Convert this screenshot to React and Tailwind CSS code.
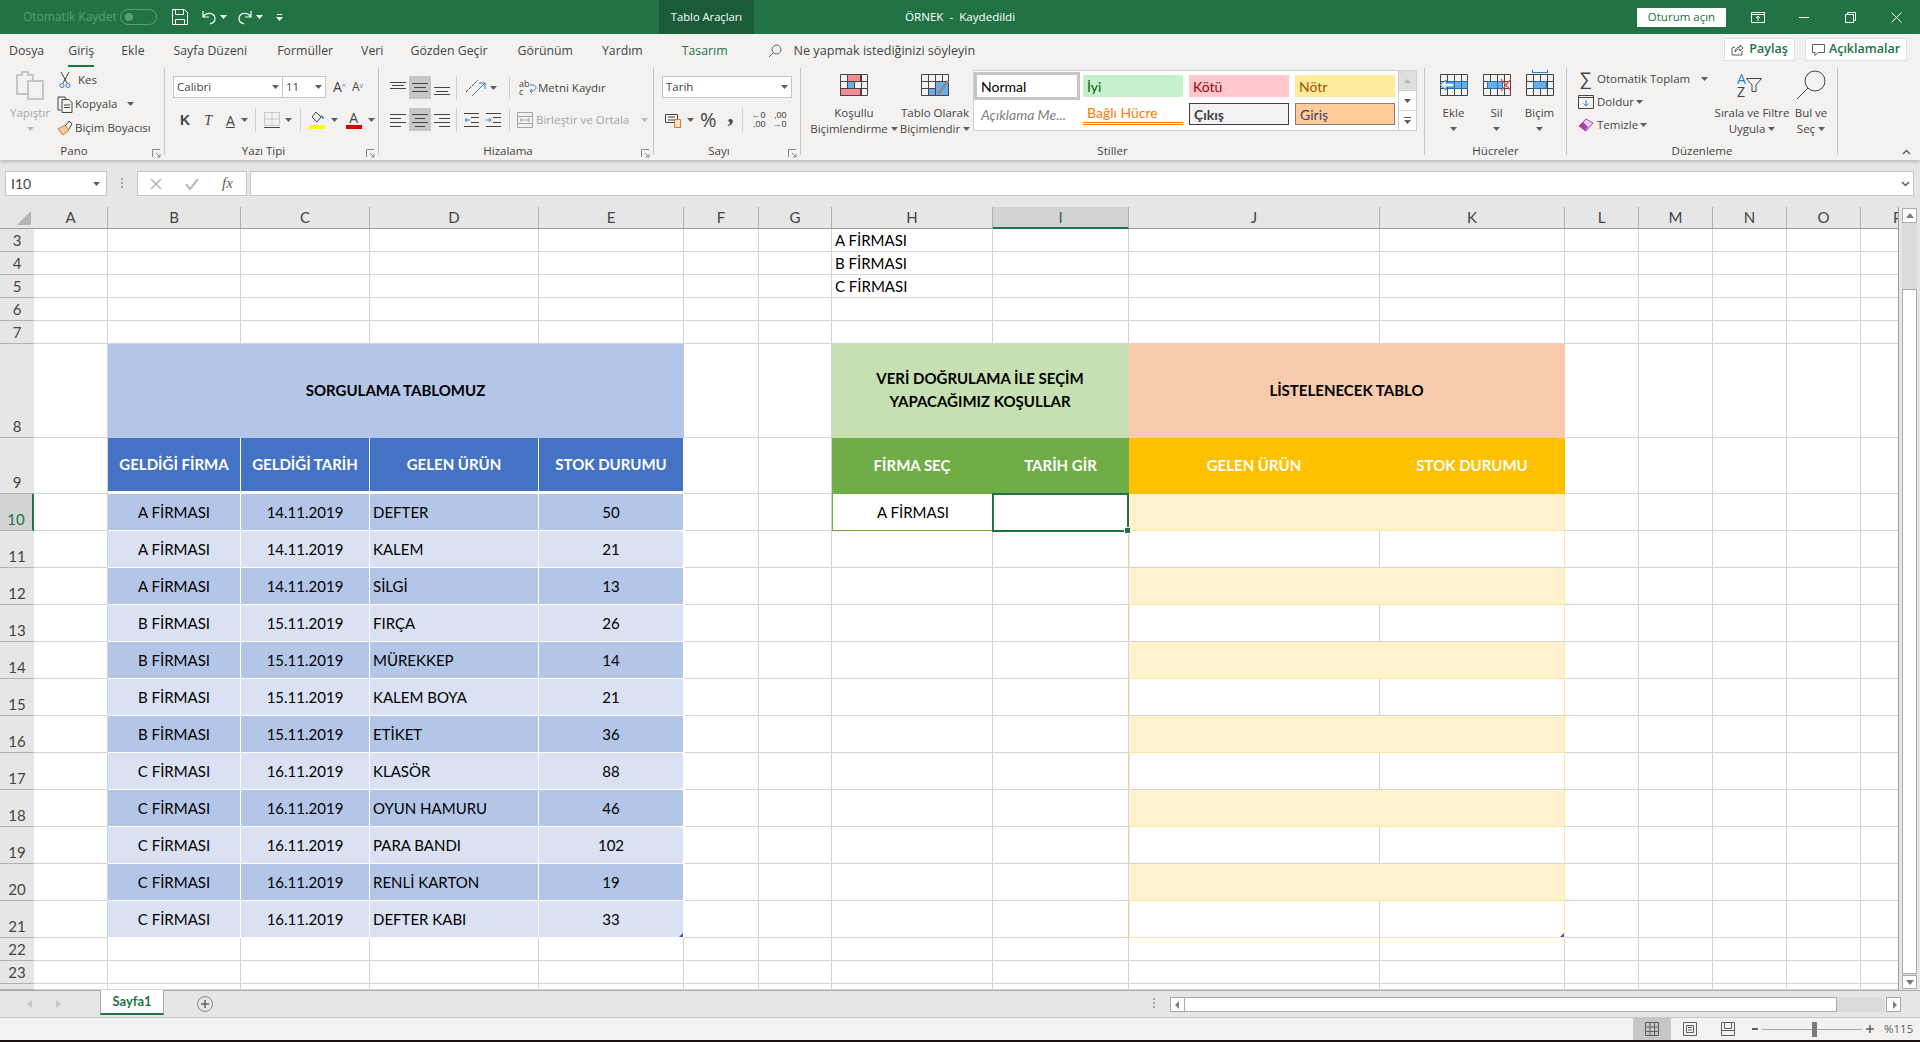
import React from "react";
import clsx from "clsx";
import { twMerge } from "tailwind-merge";

const Caret = ({ className = "fill-[#605e5c]" }) => (
  <svg width="7" height="4" viewBox="0 0 7 4" className={clsx("shrink-0", className)}>
    <path d="M0 0h7L3.5 4z" />
  </svg>
);

const Launcher = () => (
  <svg width="9" height="9" viewBox="0 0 9 9" className="absolute right-[3px] bottom-[-3px]" fill="none" stroke="#8a8886">
    <path d="M.5 8V.5H8" />
    <path d="M4 4l4 4M8 5v3H5" />
  </svg>
);

const Group = ({ className, label, launcher, children }) => (
  <div className={clsx("relative flex flex-col h-[87px] shrink-0 border-r border-[#c8c6c4]", className)}>
    <div className="flex h-[79px]">{children}</div>
    <div className={clsx("h-[8px] leading-[8px] text-center text-[11.5px] text-[#444]", launcher && "pr-[16px]")}>{label}</div>
    {launcher && <Launcher />}
  </div>
);

const LargeButton = ({ icon, lines, caret, className, disabled }) => (
  <div className={clsx("flex flex-col items-center shrink-0 pt-[2px]", disabled ? "text-[#a6a6a6]" : "text-[#444]", className)}>
    <div className="h-[30px] flex items-center justify-center mb-[5px]">{icon}</div>
    {lines.map((l, i) => (
      <div key={i} className="h-[16px] leading-[16px] text-[11.5px] whitespace-nowrap flex items-center gap-[3px]">
        {l}
        {caret && i === lines.length - 1 && <Caret />}
      </div>
    ))}
  </div>
);

const VSep = ({ className }) => <div className={clsx("w-px h-[24px] bg-[#d2d0ce] shrink-0", className)} />;

const Lines = ({ rows, sel, className }) => (
  <div className={clsx("w-[22px] h-[23px] flex items-center justify-center shrink-0", sel && "bg-[#c8c6c4]", className)}>
    <svg width="16" height="16" viewBox="0 0 16 16" stroke="#444" strokeWidth="1">
      {rows.map(([y, x1, x2], i) => (
        <path key={i} d={`M${x1} ${y}.5H${x2}`} />
      ))}
    </svg>
  </div>
);

const GridIcon = ({ children, w = 28, h = 22 }) => (
  <svg width={w} height={h} viewBox="0 0 28 22" fill="none">
    <path d="M.5.5h27v21H.5zM.5 7.5h27M.5 14.5h27M7.5.5v21M14.5.5v21M21.5.5v21" stroke="#444" />
    {children}
  </svg>
);

const tabs = [
  ["Dosya", "ml-[9px]"],
  ["Giriş", "ml-[24px]"],
  ["Ekle", "ml-[27px]"],
  ["Sayfa Düzeni", "ml-[29px]"],
  ["Formüller", "ml-[30px]"],
  ["Veri", "ml-[28px]"],
  ["Gözden Geçir", "ml-[27px]"],
  ["Görünüm", "ml-[30px]"],
  ["Yardım", "ml-[29px]"],
];

const colWidths = "grid-cols-[34px_74px_133px_129px_169px_145px_75px_73px_161px_136px_251px_185px_74px_74px_74px_74px_74px]";
const letters = ["A", "B", "C", "D", "E", "F", "G", "H", "I", "J", "K", "L", "M", "N", "O", "P"];

const rows = [
  ["A FİRMASI", "14.11.2019", "DEFTER", "50"],
  ["A FİRMASI", "14.11.2019", "KALEM", "21"],
  ["A FİRMASI", "14.11.2019", "SİLGİ", "13"],
  ["B FİRMASI", "15.11.2019", "FIRÇA", "26"],
  ["B FİRMASI", "15.11.2019", "MÜREKKEP", "14"],
  ["B FİRMASI", "15.11.2019", "KALEM BOYA", "21"],
  ["B FİRMASI", "15.11.2019", "ETİKET", "36"],
  ["C FİRMASI", "16.11.2019", "KLASÖR", "88"],
  ["C FİRMASI", "16.11.2019", "OYUN HAMURU", "46"],
  ["C FİRMASI", "16.11.2019", "PARA BANDI", "102"],
  ["C FİRMASI", "16.11.2019", "RENLİ KARTON", "19"],
  ["C FİRMASI", "16.11.2019", "DEFTER KABI", "33"],
];

const Cell = ({ className, children }) => (
  <div className={twMerge("relative flex items-center min-w-0 whitespace-nowrap border-r border-b border-[#d4d4d4]", className)}>
    {children}
  </div>
);

const RowHead = ({ n, active }) => (
  <div
    className={clsx(
      "flex items-end justify-center border-b border-[#b1b1b1] leading-[21px] text-[15px]",
      active ? "bg-[#d2d2d2] text-[#217346] border-r-2 border-r-[#217346]" : "bg-[#e6e6e6] text-[#444]"
    )}
  >
    {n}
  </div>
);

const Empty = ({ n }) => Array.from({ length: n }, (_, i) => <Cell key={i} />);

const Corner = () => (
  <svg width="4" height="4" viewBox="0 0 4 4" className="absolute right-0 bottom-0 fill-[#3f5ca8]">
    <path d="M4 0v4H0z" />
  </svg>
);

const StyleCell = ({ className, children }) => (
  <div className={clsx("h-[22px] flex items-center px-[4px] text-[14px] font-['Lato',sans-serif] whitespace-nowrap", className)}>
    {children}
  </div>
);

const SmallArrowBox = ({ className, d }) => (
  <div className={clsx("flex items-center justify-center bg-white border border-[#ababab] shrink-0", className)}>
    <svg width="8" height="8" viewBox="0 0 8 8" className="fill-[#7a7a7a]">
      <path d={d} />
    </svg>
  </div>
);

export default function App() {
  return (
    <div className="w-[1920px] h-[1042px] overflow-hidden flex flex-col bg-[#f3f2f1] font-['Open_Sans',sans-serif] text-[#444]">
      {/* title bar */}
      <div className="h-[34px] shrink-0 bg-[#217346] flex items-center text-white">
        <span className="ml-[23px] text-[12px] text-[#5d9c7b] w-[90px] whitespace-nowrap">Otomatik Kaydet</span>
        <div className="ml-[7px] w-[37px] h-[16px] rounded-full border border-[#5d9c7b] flex items-center pl-[4px]">
          <div className="w-[8px] h-[8px] rounded-full bg-[#5d9c7b]" />
        </div>
        <svg width="16" height="16" viewBox="0 0 16 16" fill="none" stroke="#fff" className="ml-[15px]">
          <path d="M.5.5h12l3 3v12H.5zM3.5.5v5h8v-5M3.5 15.5v-5h9v5" />
        </svg>
        <svg width="16" height="16" viewBox="0 0 16 16" fill="none" stroke="#fff" strokeWidth="1.2" className="ml-[13px]">
          <path d="M2 2v6h6M2 8c3-5 11-5 12 1 .5 3-2 5-5 6" />
        </svg>
        <Caret className="fill-white ml-[3px]" />
        <svg width="16" height="16" viewBox="0 0 16 16" fill="none" stroke="#fff" strokeWidth="1.2" className="ml-[10px]">
          <path d="M14 2v6H8M14 8C11 3 3 3 2 9c-.5 3 2 5 5 6" />
        </svg>
        <Caret className="fill-white ml-[3px]" />
        <svg width="7" height="7" viewBox="0 0 7 7" className="ml-[13px] fill-white">
          <path d="M1 0h5v1H1zM0 3h7L3.5 7z" />
        </svg>
        <div className="ml-[376px] w-[95px] h-[34px] bg-[#1a5c38] flex items-center justify-center text-[11.2px] whitespace-nowrap">
          Tablo Araçları
        </div>
        <span className="ml-[151px] text-[11.6px] whitespace-nowrap w-[110px]">ÖRNEK&nbsp; -&nbsp; Kaydedildi</span>
        <div className="ml-[622px] w-[89px] h-[19px] bg-white text-[#217346] text-[11.5px] flex items-center justify-center whitespace-nowrap">
          Oturum açın
        </div>
        <svg width="14" height="11" viewBox="0 0 14 11" fill="none" stroke="#fff" className="ml-[25px]">
          <path d="M.5.5h13v10H.5zM.5 2.5h13M7 9V4M5 6l2-2 2 2" />
        </svg>
        <div className="ml-[34px] w-[10px] h-px bg-white" />
        <svg width="11" height="11" viewBox="0 0 11 11" fill="none" stroke="#fff" className="ml-[36px]">
          <path d="M.5 2.5h8v8h-8zM2.5 2.5v-2h8v8h-2" />
        </svg>
        <svg width="11" height="11" viewBox="0 0 11 11" fill="none" stroke="#fff" className="ml-[35px]">
          <path d="M.5.5l10 10M10.5.5l-10 10" />
        </svg>
      </div>

      {/* tab row */}
      <div className="h-[34px] shrink-0 flex items-center text-[12.3px] text-[#444]">
        {tabs.map(([t, m]) => (
          <div key={t} className={clsx("relative whitespace-nowrap", m)}>
            {t}
            {t === "Giriş" && <div className="absolute left-0 right-0 top-[23px] h-[2px] bg-[#217346]" />}
          </div>
        ))}
        <span className="ml-[39px] text-[#217346]">Tasarım</span>
        <svg width="14" height="14" viewBox="0 0 14 14" fill="none" stroke="#605e5c" className="ml-[40px]">
          <circle cx="8.5" cy="5.5" r="4.5" />
          <path d="M5 9l-4 4" />
        </svg>
        <span className="ml-[12px] whitespace-nowrap text-[12.6px]">Ne yapmak istediğinizi söyleyin</span>
        <div className="ml-auto flex items-center gap-[10px] mr-[13px] mt-[-3px]">
          <div className="w-[71px] h-[23px] bg-white border border-[#e1dfdd] flex items-center justify-center gap-[5px] text-[#217346] text-[12.5px] font-semibold">
            <svg width="13" height="13" viewBox="0 0 13 13" fill="none" stroke="#605e5c">
              <path d="M1 5v7h10V8M1 5l3-1M4 9c0-3 2-5 5-5V2l3 3-3 3V6C7 6 5 7 4 9z" />
            </svg>
            Paylaş
          </div>
          <div className="w-[102px] h-[23px] bg-white border border-[#e1dfdd] flex items-center justify-center gap-[4px] text-[#217346] text-[12.5px] font-semibold">
            <svg width="13" height="12" viewBox="0 0 13 12" fill="none" stroke="#605e5c">
              <path d="M.5.5h12v8H6l-3 3v-3H.5z" />
            </svg>
            Açıklamalar
          </div>
        </div>
      </div>

      {/* ribbon */}
      <div className="h-[92px] shrink-0 flex relative z-20 shadow-[0_2px_3px_rgba(0,0,0,0.18)] bg-[#f3f2f1]">
        <Group className="w-[165px]" label="Pano" launcher>
          <LargeButton
            disabled
            className="w-[48px] ml-[6px]"
            lines={["Yapıştır", <Caret key="c" className="fill-[#b8b8b8]" />]}
            icon={
              <svg width="28" height="29" viewBox="0 0 28 29" fill="none" stroke="#b8b8b8" strokeWidth="1.5">
                <path d="M13 23H1V4h5V1h6v3h5v6" />
                <path d="M12 10h15v18H12z" fill="#f3f2f1" />
              </svg>
            }
          />
          <div className="flex flex-col text-[11.5px] ml-[3px]">
            <div className="h-[24px] flex items-center gap-[7px]">
              <svg width="12" height="17" viewBox="0 0 12 17" fill="none" stroke="#444" className="ml-[2px]">
                <path d="M2 0l6 11M10 0L4 11" />
                <circle cx="3" cy="13.5" r="2" stroke="#2b7cd3" />
                <circle cx="9" cy="13.5" r="2" stroke="#2b7cd3" />
              </svg>
              Kes
            </div>
            <div className="h-[24px] flex items-center gap-[2px]">
              <svg width="16" height="17" viewBox="0 0 16 17" fill="none" stroke="#444">
                <path d="M4 14H1V1h7l1 2" />
                <path d="M5 3.5h7l3 3v10H5zM7 9h6M7 11.500h6" />
              </svg>
              Kopyala
              <Caret className="fill-[#605e5c] ml-[8px]" />
            </div>
            <div className="h-[24px] flex items-center gap-[2px] whitespace-nowrap">
              <svg width="16" height="16" viewBox="0 0 16 16" fill="none">
                <path d="M1 9l7-4 4 5-6 5z" fill="#f8c9a0" stroke="#d9752c" />
                <path d="M8 6l4-5 3 3-3 5" stroke="#444" />
              </svg>
              Biçim Boyacısı
            </div>
          </div>
        </Group>

        <Group className="w-[214px]" label="Yazı Tipi" launcher>
          <div className="flex flex-col ml-[8px]">
            <div className="flex items-center h-[22px] mt-[8px]">
              <div className="w-[110px] h-[22px] bg-white border border-[#c8c6c4] flex items-center justify-between px-[3px] text-[11.5px]">
                Calibri
                <Caret />
              </div>
              <div className="w-[43px] h-[22px] bg-white border border-l-0 border-[#c8c6c4] flex items-center justify-between px-[3px] text-[11.5px]">
                11
                <Caret />
              </div>
              <span className="ml-[7px] text-[14px] leading-none">A<sup className="text-[#2b7cd3] text-[7px]">^</sup></span>
              <span className="ml-[6px] text-[12px] leading-none">A<sup className="text-[#2b7cd3] text-[7px]">v</sup></span>
            </div>
            <div className="flex items-center h-[24px] mt-[10px] text-[14px]">
              <span className="ml-[7px] font-bold font-['Liberation_Sans',sans-serif]">K</span>
              <span className="ml-[14px] italic font-['Liberation_Serif',serif]">T</span>
              <span className="ml-[14px] underline">A</span>
              <Caret className="fill-[#605e5c] ml-[6px]" />
              <VSep className="ml-[7px]" />
              <svg width="16" height="16" viewBox="0 0 16 16" fill="none" stroke="#a6a6a6" strokeDasharray="1 1" className="ml-[8px]">
                <path d="M.5.500h15v13H.5zM8 .5v13M.5 7h15" />
                <path d="M0 15.500h16" stroke="#444" strokeDasharray="none" />
              </svg>
              <Caret className="fill-[#605e5c] ml-[5px]" />
              <VSep className="ml-[8px]" />
              <svg width="16" height="18" viewBox="0 0 16 18" fill="none" className="ml-[8px]">
                <path d="M7 1l5 5-4 5-5-5z" stroke="#444" />
                <path d="M12 5c2 0 2 2 2 3" stroke="#2b7cd3" strokeWidth="1.500" />
                <path d="M0 14h16v4H0z" fill="#ffff00" />
              </svg>
              <Caret className="fill-[#605e5c] ml-[6px]" />
              <div className="ml-[8px] w-[16px] flex flex-col items-center leading-[14px] text-[14px]">
                A
                <div className="w-[16px] h-[4px] bg-[#e00000]" />
              </div>
              <Caret className="fill-[#605e5c] ml-[6px]" />
            </div>
          </div>
        </Group>

        <Group className="w-[275px]" label="Hizalama" launcher>
          <div className="flex flex-col ml-[8px] text-[11.5px]">
            <div className="flex items-center h-[23px] mt-[8px]">
              <Lines rows={[[2, 0, 16], [5, 2, 14], [8, 0, 16]]} />
              <Lines sel rows={[[3, 0, 16], [7, 2, 14], [11, 0, 16]]} />
              <Lines rows={[[7, 0, 16], [11, 2, 14], [14, 0, 16]]} />
              <VSep className="ml-[3px]" />
              <svg width="24" height="20" viewBox="0 0 24 20" fill="none" className="ml-[7px]">
                <path d="M2 14L14 2" stroke="#444" strokeDasharray="3 1" />
                <path d="M8 18L21 5M15 5h6v6" stroke="#2b7cd3" />
              </svg>
              <Caret className="fill-[#605e5c] ml-[2px]" />
              <VSep className="ml-[12px]" />
              <div className="ml-[9px] w-[9px] flex flex-col leading-[8px] text-[9px]">
                <span>ab</span>
                <span>c</span>
              </div>
              <svg width="9" height="12" viewBox="0 0 9 12" fill="none" stroke="#2b7cd3">
                <path d="M2 3c8-1 8 6 0 6m0 0l2-2m-2 2l2 2" />
              </svg>
              <span className="ml-[1px] whitespace-nowrap">Metni Kaydır</span>
            </div>
            <div className="flex items-center h-[23px] mt-[9px]">
              <Lines rows={[[2, 0, 16], [6, 0, 11], [10, 0, 16], [14, 0, 11]]} />
              <Lines sel rows={[[2, 0, 16], [6, 3, 13], [10, 0, 16], [14, 3, 13]]} />
              <Lines rows={[[2, 0, 16], [6, 5, 16], [10, 0, 16], [14, 5, 16]]} />
              <VSep className="ml-[3px]" />
              <svg width="15" height="14" viewBox="0 0 15 14" fill="none" className="ml-[7px]">
                <path d="M0 .500h15M7 4.500h8M7 9.500h8M0 13.500h15" stroke="#444" />
                <path d="M6 7H1M3 5L1 7l2 2" stroke="#2b7cd3" />
              </svg>
              <svg width="15" height="14" viewBox="0 0 15 14" fill="none" className="ml-[7px]">
                <path d="M0 .500h15M7 4.500h8M7 9.500h8M0 13.500h15" stroke="#444" />
                <path d="M0 7h5M3 5l2 2-2 2" stroke="#2b7cd3" />
              </svg>
              <VSep className="ml-[8px]" />
              <svg width="16" height="16" viewBox="0 0 16 16" fill="none" stroke="#a6a6a6" className="ml-[7px]">
                <path d="M.5.500h15v15H.5zM.5 4.500h15M.5 11.500h15M3 8h10M5 6L3 8l2 2M11 6l2 2-2 2" />
              </svg>
              <span className="ml-[3px] text-[#a6a6a6] whitespace-nowrap">Birleştir ve Ortala</span>
              <Caret className="fill-[#b8b8b8] ml-[12px]" />
            </div>
          </div>
        </Group>

        <Group className="w-[147px]" label="Sayı" launcher>
          <div className="flex flex-col ml-[8px] text-[11.5px]">
            <div className="w-[130px] h-[22px] mt-[8px] bg-white border border-[#c8c6c4] flex items-center justify-between px-[3px]">
              Tarih
              <Caret />
            </div>
            <div className="flex items-center h-[24px] mt-[10px]">
              <svg width="17" height="16" viewBox="0 0 17 16" fill="none" className="ml-[3px]">
                <path d="M.5 2.500h12v8H.5z" stroke="#444" />
                <path d="M3 5h7M3 8h7" stroke="#444" />
                <path d="M9.500 7.500h6v8h-6z" fill="#fbe3c8" stroke="#e07a1f" />
              </svg>
              <Caret className="fill-[#605e5c] ml-[5px]" />
              <span className="ml-[6px] text-[20px] leading-none">%</span>
              <span className="ml-[11px] mb-[12px] text-[24px] leading-none font-bold font-['Liberation_Serif',serif]">,</span>
              <VSep className="ml-[8px]" />
              <div className="ml-[5px] flex flex-col leading-[9px] text-[9px] w-[18px] font-['Liberation_Sans',sans-serif]">
                <span className="text-right"><span className="text-[#2b7cd3]">←</span>0</span>
                <span className="text-right">,00</span>
              </div>
              <div className="ml-[3px] flex flex-col leading-[9px] text-[9px] w-[18px] font-['Liberation_Sans',sans-serif]">
                <span className="text-right">,00</span>
                <span className="text-right"><span className="text-[#2b7cd3]">→</span>0</span>
              </div>
            </div>
          </div>
        </Group>

        <Group className="w-[624px]" label="Stiller">
          <LargeButton
            caret
            className="w-[90px] ml-[8px]"
            lines={["Koşullu", "Biçimlendirme"]}
            icon={
              <GridIcon>
                <path d="M7.5.5h13v7h-13zM.5 14.500h20v7H.5z" fill="#f28d97" stroke="#444" />
                <path d="M7.500 7.500h7v7h-7z" fill="#6aaee8" stroke="#444" />
              </GridIcon>
            }
          />
          <LargeButton
            caret
            className="w-[72px]"
            lines={["Tablo Olarak", "Biçimlendir"]}
            icon={
              <GridIcon>
                <path d="M14.500 7.500h13v14h-13zM7.500 14.500h7v7h-7z" fill="#6aaee8" stroke="#444" />
                <path d="M17 20L27 7" stroke="#8a8a8a" strokeWidth="3" />
              </GridIcon>
            }
          />
          <div className="flex h-[61px] mt-[2px] ml-[2px]">
            <div className="w-[426px] bg-white border border-[#d2d0ce] pl-[3px] pt-[4px] grid grid-cols-[100px_100px_100px_100px] gap-x-[6px] gap-y-[6px] content-start">
              <StyleCell className="border-[3px] border-[#c8c6c4] -m-[3px] h-[28px] text-black">Normal</StyleCell>
              <StyleCell className="bg-[#c6efce] text-[#006100]">İyi</StyleCell>
              <StyleCell className="bg-[#ffc7ce] text-[#9c0006]">Kötü</StyleCell>
              <StyleCell className="bg-[#ffeb9c] text-[#9c5700]">Nötr</StyleCell>
              <StyleCell className="italic text-[#7f7f7f]">Açıklama Me...</StyleCell>
              <StyleCell className="text-[#fa7d00] border-b-[3px] border-double border-[#ff8001]">Bağlı Hücre</StyleCell>
              <StyleCell className="bg-[#f2f2f2] border border-[#3f3f3f] font-bold text-[#3f3f3f]">Çıkış</StyleCell>
              <StyleCell className="bg-[#ffcc99] border border-[#7f7f7f] text-[#3f3f76]">Giriş</StyleCell>
            </div>
            <div className="w-[18px] flex flex-col">
              <div className="h-[21px] bg-[#e1dfdd] border border-l-0 border-[#d2d0ce] flex items-center justify-center">
                <Caret className="fill-[#b8b8b8] rotate-180" />
              </div>
              <div className="h-[19px] bg-white border-r border-[#d2d0ce] flex items-center justify-center">
                <Caret />
              </div>
              <div className="h-[21px] bg-white border border-l-0 border-[#d2d0ce] flex flex-col items-center justify-center gap-[2px]">
                <div className="w-[7px] h-px bg-[#605e5c]" />
                <Caret />
              </div>
            </div>
          </div>
        </Group>

        <Group className="w-[142px]" label="Hücreler">
          <LargeButton
            className="w-[43px] ml-[7px]"
            lines={["Ekle", <Caret key="c" />]}
            icon={
              <GridIcon>
                <path d="M7.500 7.500h20v7h-20zM14.500 7.500v7M21.500 7.500v7" fill="#6aaee8" stroke="#1f6fb5" />
                <path d="M0 11l6-5v3h8v4H6v3z" fill="#eaf4fd" stroke="#2b7cd3" />
              </GridIcon>
            }
          />
          <LargeButton
            className="w-[43px]"
            lines={["Sil", <Caret key="c" />]}
            icon={
              <GridIcon>
                <path d="M4.500 7.500h15v7h-15zM14.500 7.500v7" fill="#6aaee8" stroke="#1f6fb5" />
                <path d="M18 5l10 12M28 5L18 17" stroke="#e8534a" strokeWidth="1.200" />
              </GridIcon>
            }
          />
          <LargeButton
            className="w-[43px]"
            lines={["Biçim", <Caret key="c" />]}
            icon={
              <div className="flex flex-col items-center -mt-[4px]">
                <div className="w-[16px] h-[3px] border-x border-b border-[#2b7cd3] mb-[1px]" />
                <GridIcon>
                  <path d="M7.500 7.500h13v7h-13z" fill="#6aaee8" stroke="#1f6fb5" />
                </GridIcon>
              </div>
            }
          />
        </Group>

        <Group className="w-[271px]" label="Düzenleme">
          <div className="flex flex-col text-[11.5px] w-[146px] pl-[11px]">
            <div className="h-[24px] flex items-center mt-[-1px]">
              <span className="w-[16px] ml-[1px] text-[18px] leading-none text-[#444] font-['Liberation_Sans',sans-serif]">∑</span>
              <span className="ml-[2px] whitespace-nowrap">Otomatik Toplam</span>
              <Caret className="fill-[#605e5c] ml-[11px]" />
            </div>
            <div className="h-[22px] flex items-center">
              <svg width="16" height="14" viewBox="0 0 16 14" fill="none" stroke="#444">
                <path d="M.5.500h15v13H.5zM.5 2.500h15" />
                <path d="M8 5v6M5.500 8.500L8 11l2.500-2.500" stroke="#2b7cd3" />
              </svg>
              <span className="ml-[3px]">Doldur</span>
              <Caret className="fill-[#605e5c] ml-[2px]" />
            </div>
            <div className="h-[24px] flex items-center">
              <svg width="16" height="14" viewBox="0 0 16 14" fill="none">
                <path d="M1 8l7-7 7 4-7 8z" fill="#e7cfe9" stroke="#a344a8" />
                <path d="M1 8l4-4 5 5-3 4z" fill="#a344a8" />
              </svg>
              <span className="ml-[3px]">Temizle</span>
              <Caret className="fill-[#605e5c] ml-[2px]" />
            </div>
          </div>
          <LargeButton
            caret
            className="w-[78px]"
            lines={["Sırala ve Filtre", "Uygula"]}
            icon={
              <div className="flex items-center leading-[13px] text-[14px] w-[30px]">
                <div className="flex flex-col">
                  <span className="text-[#2b7cd3]">A</span>
                  <span>Z</span>
                </div>
                <svg width="16" height="14" viewBox="0 0 16 14" fill="none" stroke="#444">
                  <path d="M.5.500h15L10 7v6.500H6V7z" />
                </svg>
              </div>
            }
          />
          <LargeButton
            caret
            className="w-[40px]"
            lines={["Bul ve", "Seç"]}
            icon={
              <svg width="30" height="30" viewBox="0 0 30 30" fill="none" stroke="#444">
                <circle cx="19" cy="11" r="10" />
                <path d="M12 18L1 29" />
              </svg>
            }
          />
        </Group>

        <div className="flex-1 flex items-end justify-end pb-[5px] pr-[9px]">
          <svg width="9" height="6" viewBox="0 0 9 6" fill="none" stroke="#605e5c" strokeWidth="1.500">
            <path d="M1 5l3.500-3.500L8 5" />
          </svg>
        </div>
      </div>

      {/* formula bar */}
      <div className="h-[47px] shrink-0 bg-[#e6e6e6] flex items-start pt-[11px]">
        <div className="ml-[5px] w-[102px] h-[25px] bg-white border border-[#c6c6c6] flex items-center justify-between pl-[5px] pr-[6px] text-[14px] font-['Lato',sans-serif]">
          I10
          <Caret />
        </div>
        <div className="ml-[14px] mt-[7px] flex flex-col gap-[2px]">
          <div className="w-[2px] h-[2px] bg-[#a6a6a6]" />
          <div className="w-[2px] h-[2px] bg-[#a6a6a6]" />
          <div className="w-[2px] h-[2px] bg-[#a6a6a6]" />
        </div>
        <div className="ml-[14px] w-[110px] h-[25px] bg-white border border-[#c6c6c6] flex items-center pl-[12px]">
          <svg width="12" height="12" viewBox="0 0 12 12" fill="none" stroke="#b3b3b3" strokeWidth="1.500">
            <path d="M1 1l10 10M11 1L1 11" />
          </svg>
          <svg width="14" height="12" viewBox="0 0 14 12" fill="none" stroke="#b3b3b3" strokeWidth="2" className="ml-[23px]">
            <path d="M1 6l4 5 8-10" />
          </svg>
          <span className="ml-[23px] text-[15px] italic text-[#605e5c] font-['Liberation_Serif',serif]">fx</span>
        </div>
        <div className="ml-[3px] flex-1 mr-[6px] h-[25px] bg-white border border-[#c6c6c6] flex items-center justify-end pr-[3px]">
          <svg width="9" height="6" viewBox="0 0 9 6" fill="none" stroke="#605e5c" strokeWidth="1.500">
            <path d="M1 1l3.500 3.500L8 1" />
          </svg>
        </div>
      </div>

      {/* sheet */}
      <div className="h-[783px] shrink-0 flex bg-[#e6e6e6]">
        <div
          className={clsx(
            "w-[1899px] shrink-0 grid overflow-hidden bg-white border-r border-[#9c9c9c] font-['Lato',sans-serif] text-[15px] text-black",
            colWidths,
            "grid-rows-[22px_repeat(5,23px)_94px_56px_repeat(12,37px)_23px_23px_6px]"
          )}
        >
          <div className="bg-[#e6e6e6] border-b border-[#9c9c9c] flex items-end justify-end pr-[3px] pb-[3px]">
            <svg width="14" height="14" viewBox="0 0 14 14" className="fill-[#b4b4b4]">
              <path d="M14 0v14H0z" />
            </svg>
          </div>
          {letters.map((l) => (
            <div
              key={l}
              className={clsx(
                "flex items-center justify-center overflow-hidden border-r border-b border-r-[#b1b1b1] text-[#444]",
                l === "I" ? "bg-[#d2d2d2] text-[#217346] border-b-2 border-b-[#217346]" : "bg-[#e6e6e6] border-b-[#9c9c9c]"
              )}
            >
              {l}
            </div>
          ))}

          {[3, 4, 5, 6, 7].map((n, i) => (
            <React.Fragment key={n}>
              <RowHead n={n} />
              <Empty n={7} />
              <Cell className="pl-[3px]">{["A FİRMASI", "B FİRMASI", "C FİRMASI"][i]}</Cell>
              <Empty n={8} />
            </React.Fragment>
          ))}

          <RowHead n={8} />
          <Cell />
          <Cell className="col-span-4 justify-center bg-[#b4c6e7] font-bold border-[#b4c6e7]">SORGULAMA TABLOMUZ</Cell>
          <Empty n={2} />
          <Cell className="col-span-2 justify-center text-center bg-[#c6e0b4] font-bold leading-[23px] pb-[2px] border-[#c6e0b4]">
            VERİ DOĞRULAMA İLE SEÇİM
            <br />
            YAPACAĞIMIZ KOŞULLAR
          </Cell>
          <Cell className="col-span-2 justify-center bg-[#f8cbad] font-bold border-[#f8cbad]">LİSTELENECEK TABLO</Cell>
          <Empty n={5} />

          <RowHead n={9} />
          <Cell />
          {["GELDİĞİ FİRMA", "GELDİĞİ TARİH", "GELEN ÜRÜN", "STOK DURUMU"].map((t) => (
            <Cell key={t} className="justify-center bg-[#4472c4] text-white font-bold border-white border-b-[3px]">
              {t}
            </Cell>
          ))}
          <Empty n={2} />
          <Cell className="justify-center bg-[#70ad47] text-white font-bold border-[#70ad47]">FİRMA SEÇ</Cell>
          <Cell className="justify-center bg-[#70ad47] text-white font-bold border-[#70ad47]">TARİH GİR</Cell>
          <Cell className="justify-center bg-[#ffc000] text-white font-bold border-[#ffc000]">GELEN ÜRÜN</Cell>
          <Cell className="justify-center bg-[#ffc000] text-white font-bold border-[#ffc000]">STOK DURUMU</Cell>
          <Empty n={5} />

          {rows.map((r, i) => {
            const n = i + 10;
            const band = i % 2 === 0;
            const bg = band ? "bg-[#b4c6e7] border-white" : "bg-[#d9e1f2] border-white";
            return (
              <React.Fragment key={n}>
                <RowHead n={n} active={n === 10} />
                <Cell />
                <Cell className={clsx("justify-center", bg)}>{r[0]}</Cell>
                <Cell className={clsx("justify-center", bg)}>{r[1]}</Cell>
                <Cell className={clsx("pl-[3px]", bg)}>{r[2]}</Cell>
                <Cell className={clsx("justify-center", bg)}>
                  {r[3]}
                  {n === 21 && <Corner />}
                </Cell>
                <Empty n={2} />
                {n === 10 ? (
                  <>
                    <Cell className="justify-center border-l border-l-[#70ad47] border-b-[#70ad47] border-r-0">A FİRMASI</Cell>
                    <Cell className="z-10 border-2 border-[#217346] -ml-px -mt-px -mb-px">
                      <div className="absolute -right-[4px] -bottom-[4px] w-[7px] h-[7px] bg-[#217346] border border-white" />
                    </Cell>
                  </>
                ) : (
                  <Empty n={2} />
                )}
                {band ? (
                  <Cell className="col-span-2 bg-[#fff2cc] border-[#ffe699]" />
                ) : (
                  <>
                    <Cell className={clsx("border-l border-l-[#ffe699]", n === 21 && "border-b-[#ffe699]")} />
                    <Cell className={clsx("border-r-[#ffe699]", n === 21 && "border-b-[#ffe699]")}>{n === 21 && <Corner />}</Cell>
                  </>
                )}
                <Empty n={5} />
              </React.Fragment>
            );
          })}

          {[22, 23, 24].map((n) => (
            <React.Fragment key={n}>
              <RowHead n={n === 24 ? "" : n} />
              <Empty n={16} />
            </React.Fragment>
          ))}
        </div>

        {/* vertical scrollbar */}
        <div className="w-[15px] flex flex-col items-center ml-[3px] shrink-0 pt-[1px] pb-px">
          <SmallArrowBox className="w-[15px] h-[15px]" d="M0 6h8L4 1z" />
          <div className="flex-1 w-[15px] bg-[#dbdbdb] flex flex-col pt-[66px]">
            <div className="h-[685px] bg-white border border-[#ababab]" />
          </div>
          <SmallArrowBox className="w-[15px] h-[14px]" d="M0 2h8L4 7z" />
        </div>
      </div>

      {/* sheet tabs */}
      <div className="h-[28px] shrink-0 bg-[#e6e6e6] border-t border-[#ababab] border-b border-b-[#c8c6c4] flex items-start">
        <svg width="5" height="8" viewBox="0 0 5 8" className="ml-[27px] mt-[9px] fill-[#c4c4c4]">
          <path d="M5 0v8L0 4z" />
        </svg>
        <svg width="5" height="8" viewBox="0 0 5 8" className="ml-[24px] mt-[9px] fill-[#c4c4c4]">
          <path d="M0 0v8l5-4z" />
        </svg>
        <div className="ml-[39px] w-[64px] h-[25px] -mt-px bg-white border-x border-[#ababab] border-b-2 border-b-[#217346] text-[#217346] text-[13px] font-bold font-['Lato',sans-serif] flex items-center justify-center">
          Sayfa1
        </div>
        <div className="ml-[33px] mt-[5px] w-[16px] h-[16px] rounded-full border border-[#8a8886] flex items-center justify-center">
          <svg width="8" height="8" viewBox="0 0 8 8" fill="none" stroke="#605e5c" strokeWidth="1.500">
            <path d="M4 0v8M0 4h8" />
          </svg>
        </div>
        <div className="ml-[940px] mt-[7px] flex flex-col gap-[2px]">
          <div className="w-[2px] h-[2px] bg-[#a6a6a6]" />
          <div className="w-[2px] h-[2px] bg-[#a6a6a6]" />
          <div className="w-[2px] h-[2px] bg-[#a6a6a6]" />
        </div>
        <div className="ml-[15px] mt-[6px] flex items-stretch h-[15px]">
          <SmallArrowBox className="w-[15px]" d="M5 0v8L1 4z" />
          <div className="w-[652px] bg-white border-y border-r border-[#ababab]" />
          <div className="w-[47px] bg-[#dbdbdb]" />
          <SmallArrowBox className="w-[15px] ml-[2px]" d="M3 0v8l4-4z" />
        </div>
      </div>

      {/* status bar */}
      <div className="h-[22px] shrink-0 flex items-center justify-end text-[12px] text-[#605e5c]">
        <div className="w-[38px] h-[22px] bg-[#c8c6c4] flex items-center justify-center">
          <svg width="14" height="14" viewBox="0 0 14 14" fill="none" stroke="#605e5c">
            <path d="M.5.500h13v13H.5zM.5 5h13M.5 9.500h13M5 .5v13M9.500.5v13" />
          </svg>
        </div>
        <svg width="14" height="14" viewBox="0 0 14 14" fill="none" stroke="#605e5c" className="ml-[12px]">
          <path d="M.5.500h13v13H.5zM3.500 3.500h7v7h-7zM5 5.500h4M5 8h4" />
        </svg>
        <svg width="14" height="14" viewBox="0 0 14 14" fill="none" stroke="#605e5c" className="ml-[24px]">
          <path d="M.5.500h13v13H.5zM3.500.5v6h7v-6M.5 8.500h13" />
        </svg>
        <div className="ml-[17px] w-[6px] h-[2px] bg-[#605e5c]" />
        <div className="ml-[4px] w-[100px] h-px bg-[#a6a6a6] relative">
          <div className="absolute left-[50px] -top-[7px] w-[5px] h-[15px] bg-[#7a7a7a]" />
        </div>
        <svg width="8" height="8" viewBox="0 0 8 8" fill="none" stroke="#605e5c" strokeWidth="1.500" className="ml-[4px]">
          <path d="M4 0v8M0 4h8" />
        </svg>
        <span className="ml-[10px] mr-[8px] w-[28px] whitespace-nowrap text-[11.5px]">%115</span>
      </div>
      <div className="flex-1 bg-[#1a1210]" />
    </div>
  );
}
